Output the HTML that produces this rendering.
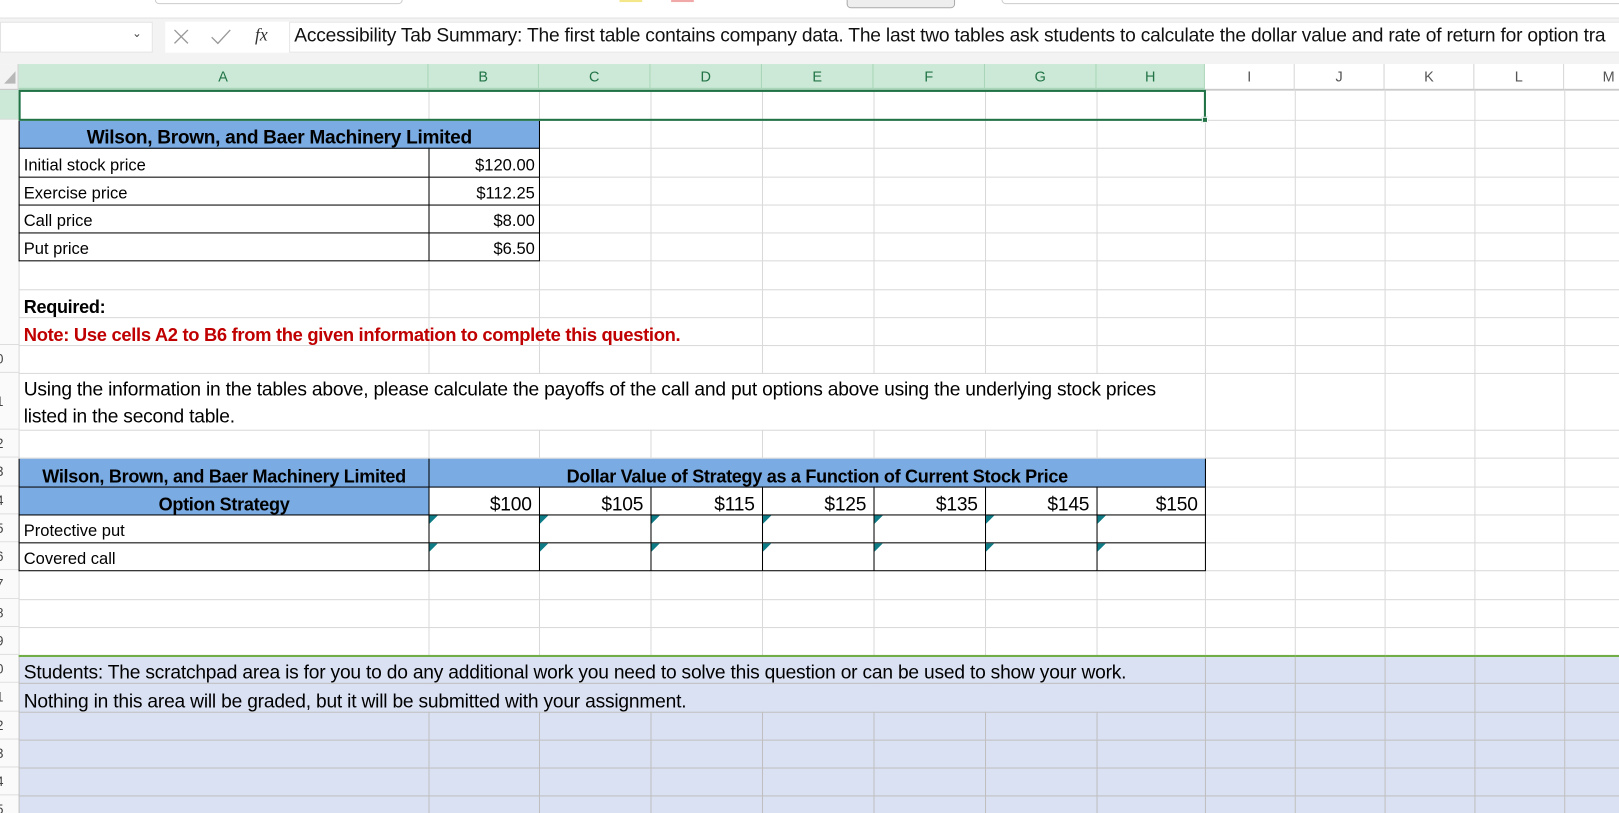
<!DOCTYPE html>
<html><head><meta charset="utf-8"><style>
*{margin:0;padding:0;box-sizing:border-box}
body{width:1619px;height:813px;overflow:hidden;background:#fff;font-family:"Liberation Sans",sans-serif}
#w{position:absolute;left:0;top:0;width:1568px;height:787px;transform:scale(1.0325,1.033);transform-origin:0 0;overflow:hidden}
.abs{position:absolute}
table{position:absolute;left:18px;top:87px;width:1584px;border-collapse:collapse;table-layout:fixed}
td{border:1px solid #d9d9d9;padding:0 4px;white-space:nowrap;font-size:16px;color:#000;vertical-align:bottom;line-height:20px;overflow:visible}
.c{font-family:"Liberation Sans",sans-serif;font-size:18.6px;letter-spacing:-0.2px}
.b{font-weight:bold;font-size:17.5px;letter-spacing:-0.3px}
.blue{background:#7aabe2}
.k{border:1px solid #000}
.r{text-align:right;padding-right:7px}
.s td{background:#dae1f3;border-color:#bfbfbf}
.tri{position:relative}
.tri:before{content:"";position:absolute;left:0;top:0;border-top:8px solid #0e7c86;border-right:8px solid transparent}
.hd{position:absolute;top:62px;height:25px;font-size:14px;text-align:center;line-height:25px;border-right:1px solid #d0d0d0;border-bottom:1px solid #c0c0c0}
.g{background:#cbe9d6;color:#217346;border-right-color:#a9d6b9;border-bottom:2px solid #a9d6b9}
.n{background:#fff;color:#555}
.rn{position:absolute;left:0;width:18px;font-size:13px;color:#444;overflow:hidden;text-indent:-4px;background:#fafafa;border-bottom:1px solid #ddd}
</style></head><body><div id="w">
<div class="abs" style="left:0;top:0;width:1568px;height:18px;background:#fff;border-bottom:1px solid #e0e0e0"></div>
<div class="abs" style="left:150px;top:-6px;width:240px;height:10px;border:1px solid #ccc;border-radius:4px"></div>
<div class="abs" style="left:600px;top:0;width:22px;height:2px;background:#f3e78a"></div>
<div class="abs" style="left:650px;top:0;width:22px;height:2px;background:#f0a8a8"></div>
<div class="abs" style="left:820px;top:-6px;width:105px;height:14px;border:1px solid #aaa;border-radius:4px;background:#eee"></div>
<div class="abs" style="left:970px;top:-6px;width:620px;height:10px;border:1px solid #ccc;border-radius:4px"></div>
<div class="abs" style="left:0;top:18px;width:1568px;height:44px;background:#f3f3f3"></div>
<div class="abs" style="left:0;top:21px;width:148px;height:30px;background:#fff;border:1px solid #e3e3e3"></div>
<div class="abs" style="left:128px;top:26px;font-size:11px;color:#444">&#8964;</div>
<div class="abs" style="left:160px;top:21px;width:122px;height:30px;background:#fff"></div>
<svg class="abs" style="left:165px;top:26px" width="80" height="20"><path d="M4 3L17 16M17 3L4 16" stroke="#999" stroke-width="1.3" fill="none"/><path d="M40 10L46 16L58 3" stroke="#999" stroke-width="1.3" fill="none"/></svg>
<div class="abs" style="left:247px;top:24px;font-family:'Liberation Serif',serif;font-style:italic;font-size:17px;color:#333">fx</div>
<div class="abs" style="left:280px;top:21px;width:1290px;height:30px;background:#fff;border:1px solid #e6e6e6"></div>
<div class="abs" style="left:285px;top:23px;font-size:18.6px;color:#111;white-space:nowrap;letter-spacing:-0.2px">Accessibility Tab Summary: The first table contains company data. The last two tables ask students to calculate the dollar value and rate of return for option tra</div>
<div class="hd n" style="left:0;width:18px;background:#f3f3f3"><svg width="16" height="20" style="margin-top:3px"><path d="M14 4L14 16L3 16Z" fill="#b8b8b8"/></svg></div>
<div class="hd g" style="left:18px;width:397px">A</div>
<div class="hd g" style="left:415px;width:107px">B</div>
<div class="hd g" style="left:522px;width:108px">C</div>
<div class="hd g" style="left:630px;width:108px">D</div>
<div class="hd g" style="left:738px;width:108px">E</div>
<div class="hd g" style="left:846px;width:108px">F</div>
<div class="hd g" style="left:954px;width:108px">G</div>
<div class="hd g" style="left:1062px;width:105px">H</div>
<div class="hd n" style="left:1167px;width:87px">I</div>
<div class="hd n" style="left:1254px;width:87px">J</div>
<div class="hd n" style="left:1341px;width:87px">K</div>
<div class="hd n" style="left:1428px;width:87px">L</div>
<div class="hd n" style="left:1515px;width:87px">M</div>
<div class="rn" style="top:87px;height:29px;background:#cbe9d6"></div>
<div class="rn" style="top:334px;height:27px;line-height:27px">0</div>
<div class="rn" style="top:361px;height:55px;line-height:55px">1</div>
<div class="rn" style="top:416px;height:27px;line-height:27px">2</div>
<div class="rn" style="top:443px;height:28px;line-height:28px">3</div>
<div class="rn" style="top:471px;height:27px;line-height:27px">4</div>
<div class="rn" style="top:498px;height:27px;line-height:27px">5</div>
<div class="rn" style="top:525px;height:27px;line-height:27px">6</div>
<div class="rn" style="top:552px;height:28px;line-height:28px">7</div>
<div class="rn" style="top:580px;height:27px;line-height:27px">8</div>
<div class="rn" style="top:607px;height:27px;line-height:27px">9</div>
<div class="rn" style="top:634px;height:27px;line-height:27px">0</div>
<div class="rn" style="top:661px;height:28px;line-height:28px">1</div>
<div class="rn" style="top:689px;height:27px;line-height:27px">2</div>
<div class="rn" style="top:716px;height:27px;line-height:27px">3</div>
<div class="rn" style="top:743px;height:27px;line-height:27px">4</div>
<div class="rn" style="top:770px;height:27px;line-height:27px">5</div>
<div class="rn" style="top:116px;height:218px"></div>

<table>
<colgroup><col style="width:397px"><col style="width:107px"><col style="width:108px"><col style="width:108px"><col style="width:108px"><col style="width:108px"><col style="width:108px"><col style="width:105px"><col style="width:87px"><col style="width:87px"><col style="width:87px"><col style="width:87px"><col style="width:87px"></colgroup>
<tr style="height:29px"><td></td><td></td><td></td><td></td><td></td><td></td><td></td><td></td><td></td><td></td><td></td><td></td><td></td></tr>
<tr style="height:27px"><td colspan="2" class="blue b k" style="text-align:center;font-size:18.5px">Wilson, Brown, and Baer Machinery Limited</td><td></td><td></td><td></td><td></td><td></td><td></td><td></td><td></td><td></td><td></td><td></td></tr>
<tr style="height:28px"><td class="k">Initial stock price</td><td class="k r" style="padding-right:4px">$120.00</td><td></td><td></td><td></td><td></td><td></td><td></td><td></td><td></td><td></td><td></td><td></td></tr>
<tr style="height:27px"><td class="k">Exercise price</td><td class="k r" style="padding-right:4px">$112.25</td><td></td><td></td><td></td><td></td><td></td><td></td><td></td><td></td><td></td><td></td><td></td></tr>
<tr style="height:27px"><td class="k">Call price</td><td class="k r" style="padding-right:4px">$8.00</td><td></td><td></td><td></td><td></td><td></td><td></td><td></td><td></td><td></td><td></td><td></td></tr>
<tr style="height:27px"><td class="k">Put price</td><td class="k r" style="padding-right:4px">$6.50</td><td></td><td></td><td></td><td></td><td></td><td></td><td></td><td></td><td></td><td></td><td></td></tr>
<tr style="height:28px"><td></td><td></td><td></td><td></td><td></td><td></td><td></td><td></td><td></td><td></td><td></td><td></td><td></td></tr>
<tr style="height:27px"><td class="b">Required:</td><td></td><td></td><td></td><td></td><td></td><td></td><td></td><td></td><td></td><td></td><td></td><td></td></tr>
<tr style="height:27px"><td class="b" style="color:#c00000;font-size:17.8px">Note: Use cells A2 to B6 from the given information to complete this question.</td><td></td><td></td><td></td><td></td><td></td><td></td><td></td><td></td><td></td><td></td><td></td><td></td></tr>
<tr style="height:27px"><td></td><td></td><td></td><td></td><td></td><td></td><td></td><td></td><td></td><td></td><td></td><td></td><td></td></tr>
<tr style="height:55px"><td colspan="8" class="c" style="white-space:normal;line-height:26px;vertical-align:middle;padding-top:2px">Using the information in the tables above, please calculate the payoffs of the call and put options above using the underlying stock prices listed in the second table.</td><td></td><td></td><td></td><td></td><td></td></tr>
<tr style="height:27px"><td></td><td></td><td></td><td></td><td></td><td></td><td></td><td></td><td></td><td></td><td></td><td></td><td></td></tr>
<tr style="height:28px"><td class="blue b k" style="text-align:center">Wilson, Brown, and Baer Machinery Limited</td><td colspan="7" class="blue b k" style="text-align:center">Dollar Value of Strategy as a Function of Current Stock Price</td><td></td><td></td><td></td><td></td><td></td></tr>
<tr style="height:27px"><td class="blue b k" style="text-align:center">Option Strategy</td><td class="k r c">$100</td><td class="k r c">$105</td><td class="k r c">$115</td><td class="k r c">$125</td><td class="k r c">$135</td><td class="k r c">$145</td><td class="k r c">$150</td><td></td><td></td><td></td><td></td><td></td></tr>
<tr style="height:27px"><td class="k">Protective put</td><td class="k tri"></td><td class="k tri"></td><td class="k tri"></td><td class="k tri"></td><td class="k tri"></td><td class="k tri"></td><td class="k tri"></td><td></td><td></td><td></td><td></td><td></td></tr>
<tr style="height:27px"><td class="k">Covered call</td><td class="k tri"></td><td class="k tri"></td><td class="k tri"></td><td class="k tri"></td><td class="k tri"></td><td class="k tri"></td><td class="k tri"></td><td></td><td></td><td></td><td></td><td></td></tr>
<tr style="height:28px"><td></td><td></td><td></td><td></td><td></td><td></td><td></td><td></td><td></td><td></td><td></td><td></td><td></td></tr>
<tr style="height:27px"><td></td><td></td><td></td><td></td><td></td><td></td><td></td><td></td><td></td><td></td><td></td><td></td><td></td></tr>
<tr style="height:27px"><td></td><td></td><td></td><td></td><td></td><td></td><td></td><td></td><td></td><td></td><td></td><td></td><td></td></tr>
<tr class="s" style="height:27px"><td colspan="8" class="c" style="border-top:2px solid #70ad47">Students: The scratchpad area is for you to do any additional work you need to solve this question or can be used to show your work.</td><td style="border-top:2px solid #70ad47"></td><td style="border-top:2px solid #70ad47"></td><td style="border-top:2px solid #70ad47"></td><td style="border-top:2px solid #70ad47"></td><td style="border-top:2px solid #70ad47"></td></tr>
<tr class="s" style="height:28px"><td colspan="8" class="c">Nothing in this area will be graded, but it will be submitted with your assignment.</td><td></td><td></td><td></td><td></td><td></td></tr>
<tr class="s" style="height:27px"><td></td><td></td><td></td><td></td><td></td><td></td><td></td><td></td><td></td><td></td><td></td><td></td><td></td></tr>
<tr class="s" style="height:27px"><td></td><td></td><td></td><td></td><td></td><td></td><td></td><td></td><td></td><td></td><td></td><td></td><td></td></tr>
<tr class="s" style="height:27px"><td></td><td></td><td></td><td></td><td></td><td></td><td></td><td></td><td></td><td></td><td></td><td></td><td></td></tr>
<tr class="s" style="height:27px"><td></td><td></td><td></td><td></td><td></td><td></td><td></td><td></td><td></td><td></td><td></td><td></td><td></td></tr>
</table>
<div class="abs" style="left:18px;top:87px;width:1150px;height:30px;border:2px solid #217346"></div>
<div class="abs" style="left:1164px;top:113px;width:6px;height:6px;background:#217346;border:1px solid #fff"></div>
</div></body></html>
